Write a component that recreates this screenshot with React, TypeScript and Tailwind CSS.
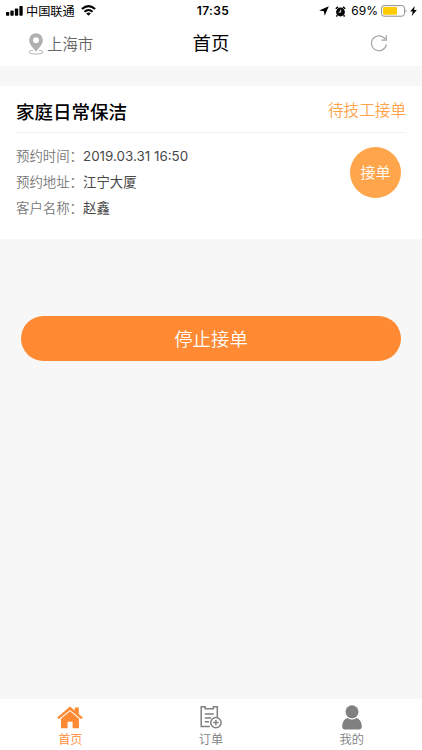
import { useState } from 'react';
import type { ReactNode } from 'react';

const HomeIcon = () => (
  <svg width="26" height="23" viewBox="0 0 26 23" fill="currentColor">
    <path d="M13 0.6 L17.8 4.6 V1.6 H21.8 V8 L25.8 11.4 L24.3 13.3 L13 3.9 L1.7 13.3 L0.2 11.4 Z" />
    <path d="M13 5.2 L22 12.7 V22.2 H15.6 V15.8 H10.6 V22.2 H4 V12.7 Z" />
  </svg>
);

const OrderIcon = () => (
  <svg width="22" height="24" viewBox="0 0 22 24" fill="none" stroke="currentColor" strokeWidth="1.5">
    <path d="M5 1.8 H1.2 V21.5 H9.8 M13.6 1.8 H17.3 V12" />
    <path d="M5.2 1 V3.8 H13.4 V1" />
    <path d="M4.8 8.9 H13.8 M4.8 13 H11.2 M4.8 16.8 H9" />
    <circle cx="15.9" cy="17.6" r="5.2" />
    <path d="M13.2 17.6 H18.6 M15.9 14.9 V20.3" />
  </svg>
);

const UserIcon = () => (
  <svg width="20" height="25" viewBox="0 0 20 25" fill="currentColor">
    <circle cx="10" cy="6.8" r="6.5" />
    <path d="M5.4 13 Q10 16 14.6 13 C18 14.3 19.8 17.8 19.8 21.5 C19.8 23.6 18.7 24.4 17 24.4 H3 C1.3 24.4 0.2 23.6 0.2 21.5 C0.2 17.8 2 14.3 5.4 13 Z" />
  </svg>
);

const StatusBar = () => (
  <div className="flex h-[22px] items-center justify-between pl-1.5 pr-[5px] text-black">
    <div className="flex flex-1 items-center">
      <svg width="17" height="10" viewBox="0 0 17 10">
        <rect x="0" y="6.1" width="3.3" height="3.7" rx="0.7" />
        <rect x="4.4" y="4.5" width="3.3" height="5.3" rx="0.7" />
        <rect x="8.9" y="2.5" width="3.3" height="7.3" rx="0.7" />
        <rect x="13.4" y="0" width="3.3" height="9.8" rx="0.7" />
      </svg>
      <span className="ml-[3px] text-[12.2px] leading-none">中国联通</span>
      <svg className="ml-[6px]" width="15" height="11" viewBox="0 0 15 11" fill="none" stroke="black" strokeWidth="2">
        <path d="M0.9 4.1 Q7.5 -1.9 14.1 4.1" />
        <path d="M3.4 6.8 Q7.5 3.2 11.6 6.8" />
        <path d="M7.5 10.7 L5.2 8.4 Q7.5 6.6 9.8 8.4 Z" fill="black" stroke="none" />
      </svg>
    </div>
    <span className="pl-[3px] font-['Inter'] text-[12px] font-semibold leading-none tracking-[0.4px]">17:35</span>
    <div className="flex flex-1 items-center justify-end">
      <svg width="10" height="10" viewBox="0 0 10 10">
        <path d="M9.8 0.2 L5.7 9.8 L4.9 5.2 L0.2 4.5 Z" />
      </svg>
      <svg className="ml-1.5" width="11" height="11" viewBox="0 0 11 11">
        <circle cx="5.5" cy="6" r="4.4" />
        <path d="M0.8 2.8 L3 0.9 M10.2 2.8 L8 0.9 M2.4 9.2 L1.4 10.5 M8.6 9.2 L9.6 10.5" stroke="black" strokeWidth="1.5" />
        <path d="M5.7 3.6 V6.2 H3.5" fill="none" stroke="white" strokeWidth="0.9" />
      </svg>
      <span className="ml-[5px] font-['Inter'] text-[12px] leading-none">69%</span>
      <svg className="ml-[3px]" width="26" height="12" viewBox="0 0 26 12">
        <rect x="0.5" y="0.6" width="23" height="10.6" rx="2.6" fill="none" stroke="#8f8f8f" />
        <rect x="2" y="2.1" width="14" height="7.6" rx="1" fill="#fecb05" />
        <path d="M24.7 4 Q26.3 5.9 24.7 7.8 Z" fill="#8f8f8f" />
      </svg>
      <svg className="ml-[3px]" width="7" height="10" viewBox="0 0 7 10">
        <path d="M4.8 0 L0.2 5.6 H2.8 L1.7 10 L6.8 4.1 H4 Z" />
      </svg>
    </div>
  </div>
);

const Header = () => (
  <header className="flex h-11 items-center pl-7 pr-[34px]">
    <div className="flex flex-1 items-center text-[#666]">
      <svg width="16" height="22" viewBox="0 0 16 22" fill="none">
        <path d="M4.8 17.4 C2.2 17.7 1 18.3 1 19.2 C1 20.4 4 21 8 21 C12 21 15 20.4 15 19.2 C15 18.3 13.8 17.7 11.2 17.4" stroke="#b0b0b0" />
        <path fillRule="evenodd" d="M8 19 C6.5 15.7 1.1 12 1.1 7.2 A6.9 6.9 0 0 1 14.9 7.2 C14.9 12 9.5 15.7 8 19 Z M8 4.2 A3 3 0 1 0 8 10.2 A3 3 0 1 0 8 4.2 Z" fill="#b0b0b0" />
      </svg>
      <span className="ml-[3px] text-[15.4px] font-[350] leading-none">上海市</span>
    </div>
    <h1 className="pb-[3px] pl-1.5 text-[18.4px] font-normal leading-none text-black">首页</h1>
    <div className="flex flex-1 justify-end pb-0.5">
      <svg width="18" height="18" viewBox="0 0 18 18" fill="none" stroke="#a6a6a6" strokeWidth="1.2">
        <path d="M15.4 5.4 A7.5 7.5 0 1 0 16.4 10.4" />
        <path d="M16.3 1.2 V6.1 H11.3" />
      </svg>
    </div>
  </header>
);

const details = [
  { label: '预约时间：', value: '2019.03.31 16:50' },
  { label: '预约地址：', value: '江宁大厦' },
  { label: '客户名称：', value: '赵鑫' },
];

const OrderCard = () => (
  <section className="mt-5 h-[153px] bg-white px-4">
    <div className="flex h-[47px] items-center justify-between border-b border-[#f3f3f3] pt-[5px]">
      <h2 className="text-[18.5px] font-medium leading-none text-black">家庭日常保洁</h2>
      <span className="pb-[3px] text-[15.6px] font-[350] leading-none text-[#ffa24b]">待技工接单</span>
    </div>
    <div className="flex justify-between pr-[5px]">
      <ul className="pt-[11px]">
        {details.map((item) => (
          <li key={item.label} className="flex h-[26px] items-center text-[13.4px] leading-none">
            <span className="w-[67px] whitespace-nowrap pb-0.5 font-[350] text-[#777]">{item.label}</span>
            <span className="font-['Inter','Noto_Sans_CJK_SC',sans-serif] text-[#484848]">{item.value}</span>
          </li>
        ))}
      </ul>
      <button className="mt-3.5 size-[51px] rounded-full bg-[#ffa64d] pb-0.5 text-[15px] font-[350] leading-none text-white">
        接单
      </button>
    </div>
  </section>
);

const tabs: { name: string; icon: ReactNode }[] = [
  { name: '首页', icon: <HomeIcon /> },
  { name: '订单', icon: <OrderIcon /> },
  { name: '我的', icon: <UserIcon /> },
];

const App = () => {
  const [active, setActive] = useState('首页');

  return (
    <div className="flex h-screen flex-col bg-[#f7f7f7] font-['Noto_Sans_CJK_SC',sans-serif]">
      <div className="bg-white">
        <StatusBar />
        <Header />
      </div>

      <main className="flex-1">
        <OrderCard />
        <div className="px-[21px] pt-[77px]">
          <button className="h-[45px] w-full rounded-full bg-[#ff8a33] text-[18.4px] font-[350] leading-none text-white">
            停止接单
          </button>
        </div>
      </main>

      <nav className="grid h-[51px] grid-cols-3 bg-white">
        {tabs.map((tab) => (
          <button
            key={tab.name}
            onClick={() => setActive(tab.name)}
            className={`flex flex-col items-center pt-[5px] ${active === tab.name ? 'text-[#ff8a33]' : 'text-[#808080]'}`}
          >
            <span className="flex h-[26px] items-center">{tab.icon}</span>
            <span className="mt-[3px] text-[12.2px] font-[350] leading-none">{tab.name}</span>
          </button>
        ))}
      </nav>
    </div>
  );
};

export default App;
